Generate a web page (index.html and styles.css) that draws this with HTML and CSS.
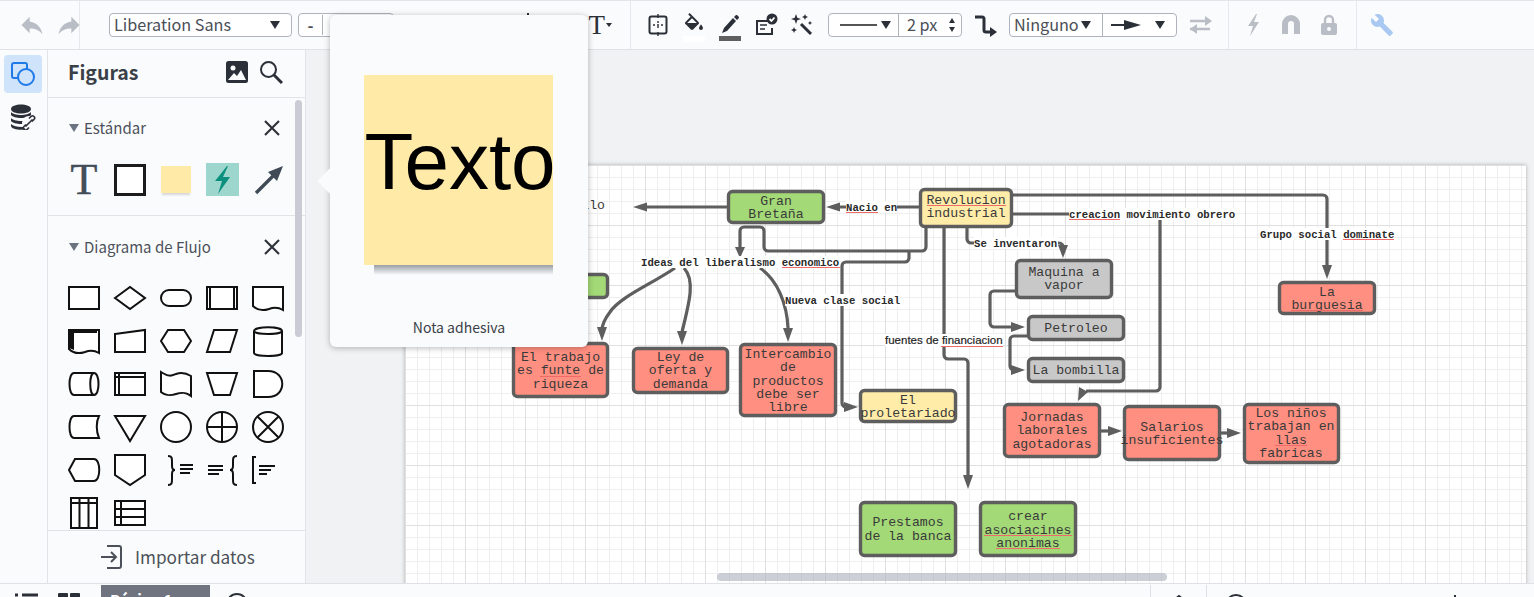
FILE: index.html
```html
<!DOCTYPE html>
<html lang="es">
<head>
<meta charset="utf-8">
<title>Mapa conceptual</title>
<link rel="stylesheet" href="styles.css">
</head>
<body>
<header class="toolbar">
  <div class="tsec sec-history">
    <svg class="ic28" viewBox="0 0 24 24"><path class="f-muted" d="M10 9V5l-7 7 7 7v-4.100c5 0 8.500 1.600 11 5.100-1-5-4-10-11-11z"/></svg>
    <svg class="ic28" viewBox="0 0 24 24"><path class="f-muted" d="M14 9V5l7 7-7 7v-4.100c-5 0-8.500 1.600-11 5.100 1-5 4-10 11-11z"/></svg>
  </div>
  <div class="tsec sec-text">
    <div class="ctl font-select"><span class="ctl-text">Liberation Sans</span><i class="caret"></i></div>
    <div class="ctl size-box"><span class="size-minus">-</span><span class="size-value">12</span><span class="size-plus">+</span></div>
    <span class="peek"></span>
    <span class="t-tool"><span class="t-glyph">T</span><i class="caret caret-sm"></i></span>
  </div>
  <div class="tsec sec-format">
    <svg class="ic24" viewBox="0 0 24 24"><rect class="s-dark" x="3.500" y="3.500" width="17" height="17" rx="2"/><path class="s-thin" d="M12 1v4M12 19v4M12 8v2M12 13v2M7 12h2M11 12h2M15 12h2"/></svg>
    <span class="bucket">
      <svg class="ic24" viewBox="0 0 24 24"><path class="f-dark" d="M16.560 8.940L7.620 0 6.210 1.410l2.380 2.380-5.150 5.150c-.59.59-.59 1.540 0 2.120l5.500 5.500c.29.29.68.44 1.060.44s.77-.15 1.060-.44l5.500-5.500c.59-.58.59-1.530 0-2.120zM5.210 10L10 5.210 14.790 10H5.210zM19 11.500s-2 2.170-2 3.500c0 1.100.9 2 2 2s2-.9 2-2c0-1.330-2-3.500-2-3.500z"/><path class="f-dark" d="M4 10h12l-6 6z"/></svg>
      <i class="bar-white"></i>
    </span>
    <span class="bucket">
      <svg class="ic24" viewBox="0 0 24 24"><path class="f-dark" d="M6 15l-2 5 5-2L18 8l-3-3zM16 4l3 3 1.500-1.500c.6-.6.6-1.400 0-2l-1-1c-.6-.6-1.400-.6-2 0z"/></svg>
      <i class="bar-dark"></i>
    </span>
    <svg class="ic24" viewBox="0 0 24 24"><path class="s-dark" d="M16 8H3v13h15v-6"/><path class="s-thin" d="M6 12h7M6 16h5"/><circle class="f-dark" cx="18" cy="6" r="5.500"/><path class="s-white" d="M15.500 6l2 2 3-3.500"/></svg>
    <svg class="ic24" viewBox="0 0 24 24"><path class="s-thick" d="M11 11l10 10"/><path class="f-dark" d="M6 1l1.300 3.700L11 6 7.300 7.300 6 11 4.700 7.300 1 6l3.700-1.300zM15 1l.9 2.100L18 4l-2.100.9L15 7l-.9-2.100L12 4l2.100-.9zM4 14l.9 2.100L7 17l-2.100.9L4 20l-.9-2.100L1 17l2.100-.9zM20 8l.7 1.300L22 10l-1.300.7L20 12l-.7-1.300L18 10l1.300-.7z"/></svg>
    <div class="ctl line-box">
      <span class="line-pick"><i class="line-sample"></i><i class="caret"></i></span>
      <span class="line-width"><span class="ctl-text">2 px</span><span class="spin"><i class="caret caret-up"></i><i class="caret caret-xs"></i></span></span>
    </div>
    <svg class="ic24" viewBox="0 0 24 24"><path class="s-thick" d="M1 4h7a2 2 0 0 1 2 2v11a2 2 0 0 0 2 2h5"/><path class="f-dark" d="M16 14l7 5-7 5z"/></svg>
    <div class="ctl end-box">
      <span class="end-start"><span class="ctl-text">Ninguno</span><i class="caret"></i></span>
      <span class="end-finish"><svg class="end-arrow" viewBox="0 0 32 12"><path class="s-dark" d="M1 6h18"/><path class="f-dark" d="M14 1l17 5-17 5z"/></svg><i class="caret"></i></span>
    </div>
    <svg class="ic24" viewBox="0 0 24 24"><path class="s-muted" d="M1 8h20M1 16h20"/><path class="f-muted" d="M16 3l7 5-7 5zM8 11l-7 5 7 5z"/></svg>
  </div>
  <div class="tsec sec-lock">
    <svg class="ic24" viewBox="0 0 24 24"><path class="f-muted" d="M15 1L7 13h5l-3 10 9-14h-5l3-8z"/></svg>
    <svg class="ic24" viewBox="0 0 24 24"><path class="f-muted" d="M3 11a9 9 0 0 1 18 0v10h-6V11a3 3 0 0 0-6 0v10H3z"/></svg>
    <svg class="ic24" viewBox="0 0 24 24"><path class="s-muted" d="M8 11V7a4 4 0 0 1 8 0v4"/><rect class="f-muted" x="4" y="10" width="16" height="12" rx="2"/><circle class="f-paper" cx="12" cy="16" r="2"/></svg>
  </div>
  <div class="tsec sec-tools">
    <svg class="ic24" viewBox="0 0 24 24"><path class="f-blue" d="M22.700 19l-9.100-9.100c.9-2.300.4-5-1.500-6.900-2-2-5-2.400-7.400-1.300L9 6 6 9 1.600 4.700C.4 7.100.9 10.100 2.900 12.100c1.900 1.900 4.600 2.400 6.900 1.500l9.100 9.100c.4.4 1 .4 1.400 0l2.300-2.300c.5-.4.5-1.100.1-1.400z"/></svg>
  </div>
</header>

<main class="workspace">
  <nav class="rail">
    <div class="rail-btn rail-active">
      <svg class="ic24" viewBox="0 0 24 24"><rect class="s-blue" x="1" y="1" width="15" height="15" rx="2"/><circle class="s-blue fill-active" cx="15" cy="15" r="8"/></svg>
    </div>
    <div class="rail-btn">
      <svg class="ic26" viewBox="0 0 26 26"><path class="f-dark" d="M1 5c0-6 20-6 20 0s-20 6-20 0zM1 8c3 4 17 4 20 0v3c-3 4-17 4-20 0zM1 14c3 4 17 4 20 0v3c-3 4-17 4-20 0zM1 20c3 3 12 4 16 2v3c-6 2-16 0-16-3z"/><circle class="f-paper" cx="19" cy="19" r="7"/><path class="s-chain" d="M15.500 22.500l7-7M19 14.500l2-2c2-2 5 1 3 3l-2 2M19 23.500l-2 2c-2 2-5-1-3-3l2-2"/></svg>
    </div>
  </nav>

  <aside class="panel">
    <div class="panel-head">
      <h2 class="panel-title">Figuras</h2>
      <svg class="ic24" viewBox="0 0 24 24"><rect class="f-dark" x="1" y="1" width="22" height="22" rx="2.500"/><circle class="f-paper" cx="8" cy="8" r="2.500"/><path class="f-paper" d="M3 20l6-7 3 3 4-6 5 10z"/></svg>
      <svg class="ic24 head-search" viewBox="0 0 24 24"><circle class="s-dark" cx="9.500" cy="9.500" r="7.500"/><path class="s-thick" d="M15 15l8 8"/></svg>
    </div>
    <section class="group group-std">
      <div class="group-head"><i class="caret caret-grey"></i><span class="group-name">Estándar</span><svg class="close" viewBox="0 0 16 16"><path class="s-close" d="M1 1l14 14M15 1L1 15"/></svg></div>
      <div class="shapes">
        <span class="shape-t">T</span>
        <span class="shape-rect"></span>
        <span class="shape-note"></span>
        <span class="shape-bolt"><svg viewBox="0 0 33 33"><path class="f-teal" d="M21 3L9 18h7l-4 13 12-17h-7l5-11z"/></svg></span>
        <svg class="shape" viewBox="0 0 32 32"><path class="s-arrow" d="M4 29L22 11"/><path class="f-arrow" d="M31 2L25 17 16 8z"/></svg>
      </div>
    </section>
    <section class="group group-flow">
      <div class="group-head"><i class="caret caret-grey"></i><span class="group-name">Diagrama de Flujo</span><svg class="close" viewBox="0 0 16 16"><path class="s-close" d="M1 1l14 14M15 1L1 15"/></svg></div>
      <div class="shapes shapes-flow">
        <svg class="shape" viewBox="0 0 32 32"><rect class="sh" x="1" y="5" width="30" height="22"/></svg>
        <svg class="shape" viewBox="0 0 32 32"><path class="sh" d="M1 16L16 5l15 11-15 11z"/></svg>
        <svg class="shape" viewBox="0 0 32 32"><rect class="sh" x="1" y="8" width="30" height="16" rx="8"/></svg>
        <svg class="shape" viewBox="0 0 32 32"><rect class="sh" x="1" y="5" width="30" height="22"/><path class="sh" d="M4 5v22M28 5v22"/></svg>
        <svg class="shape" viewBox="0 0 32 32"><path class="sh" d="M1 5h30v23c-5-3-9-3-14-1-6 2-12 1-16-3z"/></svg>

        <svg class="shape" viewBox="0 0 32 32"><path class="sh" d="M1 5h30v23c-5-3-9-3-14-1-6 2-12 1-16-3z"/><path class="f-black" d="M1 4h28v4H6v17l-5-2z"/></svg>
        <svg class="shape" viewBox="0 0 32 32"><path class="sh" d="M1 9l30-4v22H1z"/></svg>
        <svg class="shape" viewBox="0 0 32 32"><path class="sh" d="M8 5h16l7 11-7 11H8L1 16z"/></svg>
        <svg class="shape" viewBox="0 0 32 32"><path class="sh" d="M8 5h23l-7 22H1z"/></svg>
        <svg class="shape" viewBox="0 0 32 32"><path class="sh" d="M2 6c0-5 28-5 28 0v22c0 4-28 4-28 0z"/><path class="sh" d="M2 6c0 4 28 4 28 0"/></svg>

        <svg class="shape" viewBox="0 0 32 32"><path class="sh" d="M6 5h20c6 0 6 22 0 22H6C0 27 0 5 6 5z"/><path class="sh" d="M26 5c-5 0-5 22 0 22"/></svg>
        <svg class="shape" viewBox="0 0 32 32"><rect class="sh" x="1" y="5" width="30" height="22"/><path class="sh" d="M1 9h30M5 5v22"/></svg>
        <svg class="shape" viewBox="0 0 32 32"><path class="sh" d="M1 4c8 5 10 4 15 2 6-2 10-1 15 2v20c-5-4-9-4-15-2-6 2-10 2-15-2z"/></svg>
        <svg class="shape" viewBox="0 0 32 32"><path class="sh" d="M1 5h30l-7 22H8z"/></svg>
        <svg class="shape" viewBox="0 0 32 32"><path class="sh" d="M2 3h14c19 0 19 26 0 26H2z"/></svg>

        <svg class="shape" viewBox="0 0 32 32"><path class="sh" d="M6 5h25c-3 6-3 15 0 22H6C0 27 0 5 6 5z"/></svg>
        <svg class="shape" viewBox="0 0 32 32"><path class="sh" d="M1 5h30L16 30z"/></svg>
        <svg class="shape" viewBox="0 0 32 32"><circle class="sh" cx="16" cy="16" r="15"/></svg>
        <svg class="shape" viewBox="0 0 32 32"><circle class="sh" cx="16" cy="16" r="15"/><path class="sh" d="M16 1v30M1 16h30"/></svg>
        <svg class="shape" viewBox="0 0 32 32"><circle class="sh" cx="16" cy="16" r="15"/><path class="sh" d="M5.500 5.500l21 21M26.500 5.500l-21 21"/></svg>

        <svg class="shape" viewBox="0 0 32 32"><path class="sh" d="M1 16L7 5h19c7 0 7 22 0 22H7z"/></svg>
        <svg class="shape" viewBox="0 0 32 32"><path class="sh" d="M1 1h30v20L16 31 1 21z"/></svg>
        <svg class="shape" viewBox="0 0 32 32"><path class="sh-thin" d="M8 2c4 0 4 2 4 6v4c0 2 1 4 3 4-2 0-3 2-3 4v5c0 4 0 6-4 6"/><path class="sh" d="M20 11h13M20 15h13M20 19h10"/></svg>
        <svg class="shape" viewBox="0 0 32 32"><path class="sh" d="M2 12h15M2 16h15M2 20h11"/><path class="sh-thin" d="M31 2c-4 0-4 2-4 6v4c0 2-1 4-3 4 2 0 3 2 3 4v5c0 4 0 6 4 6"/></svg>
        <svg class="shape" viewBox="0 0 32 32"><path class="sh-thin" d="M4 3H1v26h3"/><path class="sh" d="M7 12h16M7 16h12M7 20h8"/></svg>

        <svg class="shape" viewBox="0 0 32 32"><rect class="sh" x="3" y="1" width="26" height="30"/><path class="sh" d="M3 6h26M11.500 1v30M20.500 1v30"/></svg>
        <svg class="shape" viewBox="0 0 32 32"><rect class="sh" x="1" y="4" width="30" height="24"/><path class="sh" d="M7 4v24M1 12h30M1 20h30"/></svg>
      </div>
    </section>
    <div class="panel-foot">
      <svg class="ic24" viewBox="0 0 24 24"><path class="s-grey" d="M7 1h12a2 2 0 0 1 2 2v18a2 2 0 0 1-2 2H7M1 12h15"/><path class="s-grey" d="M11 7l5 5-5 5"/></svg>
      <span class="foot-label">Importar datos</span>
    </div>
    <i class="panel-scroll"></i>
  </aside>

  <div class="stage">
    <div class="paper">
      <svg class="diagram" viewBox="405 165 1121 600">
        <g class="links">
          <path d="M727 207H640"/>
          <path d="M919 207H835"/>
          <path d="M740 250V231a4 4 0 0 1 4-4h16a4 4 0 0 1 4 4v16a4 4 0 0 0 4 4h154a4 4 0 0 0 4-4v-20"/>
          <path d="M909 251v7a4 4 0 0 1-4 4h-59a4 4 0 0 0-4 4v137a4 4 0 0 0 4 4h4"/>
          <path d="M944 227v128a4 4 0 0 0 4 4h16a4 4 0 0 1 4 4v113"/>
          <path d="M967 227v12a4 4 0 0 0 4 4h88a4 4 0 0 1 4 4v3"/>
          <path d="M1013 214h60"/>
          <path d="M1160 218v169a4 4 0 0 1-4 4h-70"/>
          <path d="M1013 195h310a4 4 0 0 1 4 4v68"/>
          <path d="M1015 291h-21a4 4 0 0 0-4 4v28a4 4 0 0 0 4 4h20"/>
          <path d="M1027 336h-13a4 4 0 0 0-4 4v26a4 4 0 0 0 4 4h2"/>
          <path d="M1101 431h10"/>
          <path d="M1220 433h10"/>
          <path d="M675 268c-25 17-55 29-65 44-6 8-8 14-8 18"/>
          <path d="M684 268c11 12 6 32-2 64"/>
          <path d="M760 268c18 12 27 37 28 60"/>
        </g>
        <g class="heads">
          <path d="M633 207l14-4.500v9z"/>
          <path d="M826 207l14-4.500v9z"/>
          <path d="M740 258l-5-11h10z"/>
          <path d="M858 407l-14-5v10z"/>
          <path d="M968 489l-5-14h10z"/>
          <path d="M1063 258l-5-13h10z"/>
          <path d="M1327 279l-5-14h10z"/>
          <path d="M1025 327l-14-5v10z"/>
          <path d="M1025 370l-14-5v10z"/>
          <path d="M1122 431l-14-5v10z"/>
          <path d="M1241 433l-14-5v10z"/>
          <path d="M602 341l-5-14h10z"/>
          <path d="M682 345l-5-14h10z"/>
          <path d="M788 342l-5-14h10z"/>
          <path d="M1078 401l1-14 9 5z"/>
        </g>

        <g class="label-bg">
          <rect x="846" y="201" width="51" height="12"/>
          <rect x="641" y="256" width="199" height="12"/>
          <rect x="785" y="294" width="115" height="12"/>
          <rect x="885" y="334" width="118" height="12"/>
          <rect x="974" y="237" width="84" height="12"/>
          <rect x="1069" y="208" width="166" height="12"/>
          <rect x="1260" y="228" width="134" height="12"/>
        </g>
        <g class="labels">
          <text x="846" y="211">Nacio en</text>
          <text x="641" y="266">Ideas del liberalismo economico</text>
          <text x="785" y="304">Nueva clase social</text>
          <text x="974" y="247">Se inventaron</text>
          <text x="1069" y="218">creacion movimiento obrero</text>
          <text x="1260" y="238">Grupo social dominate</text>
        </g>
        <text class="label-sans" x="885" y="344">fuentes de financiacion</text>

        <rect class="node green" x="728.500" y="191.500" width="95" height="31" rx="4"/>
        <rect class="node yellow" x="920.500" y="189.500" width="91" height="37" rx="4"/>
        <rect class="node green" x="520.500" y="274.500" width="87" height="23" rx="4"/>
        <rect class="node red" x="513.500" y="343.500" width="94" height="53" rx="4"/>
        <rect class="node red" x="633.500" y="348.500" width="94" height="44" rx="4"/>
        <rect class="node red" x="740.500" y="344.500" width="95" height="71" rx="4"/>
        <rect class="node yellow" x="860.500" y="390.500" width="95" height="31" rx="4"/>
        <rect class="node grey" x="1016.500" y="260.500" width="95" height="37" rx="4"/>
        <rect class="node grey" x="1028.500" y="316.500" width="95" height="23" rx="4"/>
        <rect class="node grey" x="1028.500" y="358.500" width="95" height="23" rx="4"/>
        <rect class="node red" x="1279.500" y="282.500" width="95" height="31" rx="4"/>
        <rect class="node red" x="1004.500" y="404.500" width="95" height="52" rx="4"/>
        <rect class="node red" x="1124.500" y="406.500" width="95" height="53" rx="4"/>
        <rect class="node red" x="1244.500" y="404.500" width="94" height="58" rx="4"/>
        <rect class="node green" x="860.500" y="502.500" width="95" height="53" rx="4"/>
        <rect class="node green" x="980.500" y="502.500" width="95" height="53" rx="4"/>

        <g class="node-text">
          <text class="start-end" x="605" y="209">Desarrollo</text>
          <text x="776" y="205">Gran</text><text x="776" y="218">Bretaña</text>
          <text x="966" y="204">Revolucion</text><text x="966" y="217">industrial</text>
          <text x="560.500" y="361">El trabajo</text><text x="560.500" y="374">es funte de</text><text x="560.500" y="388">riqueza</text>
          <text x="680.500" y="361">Ley de</text><text x="680.500" y="374">oferta y</text><text x="680.500" y="388">demanda</text>
          <text x="788" y="358">Intercambio</text><text x="788" y="371">de</text><text x="788" y="385">productos</text><text x="788" y="398">debe ser</text><text x="788" y="411">libre</text>
          <text x="908" y="404">El</text><text x="908" y="417">proletariado</text>
          <text x="1064" y="276">Maquina a</text><text x="1064" y="289">vapor</text>
          <text x="1076" y="332">Petroleo</text>
          <text x="1076" y="374">La bombilla</text>
          <text x="1327" y="296">La</text><text x="1327" y="309">burguesia</text>
          <text x="1052" y="421">Jornadas</text><text x="1052" y="434">laborales</text><text x="1052" y="448">agotadoras</text>
          <text x="1172" y="431">Salarios</text><text x="1172" y="444">insuficientes</text>
          <text x="1291" y="417">Los niños</text><text x="1291" y="430">trabajan en</text><text x="1291" y="444">llas</text><text x="1291" y="457">fabricas</text>
          <text x="908" y="526">Prestamos</text><text x="908" y="540">de la banca</text>
          <text x="1028" y="520">crear</text><text x="1028" y="534">asociacines</text><text x="1028" y="547">anonimas</text>
        </g>
        <g class="spell">
          <path d="M846 212.500h32M782 267.500h58M941 346.500h62M1069 219.500h51M1343 239.500h51"/>
          <path d="M927 205.500h79M540 376.500h41M1291 310.500h72M1275 445.500h32M984 535.500h88M996 548.500h64"/>
        </g>
      </svg>
    </div>
    <i class="stage-scroll"></i>
  </div>
</main>

<footer class="statusbar">
  <svg class="bar-ic" viewBox="0 0 24 24"><path class="s-thick" d="M1 11h3M8 11h16M1 17h3M8 17h16"/></svg>
  <svg class="bar-ic bar-grid" viewBox="0 0 24 24"><rect class="f-dark" x="1" y="9" width="10" height="10" rx="1"/><rect class="f-dark" x="13" y="9" width="10" height="10" rx="1"/></svg>
  <div class="page-tab">Página 1</div>
  <svg class="bar-ic bar-add" viewBox="0 0 24 24"><circle class="s-dark" cx="12" cy="20" r="10"/></svg>
  <span class="bar-spacer"></span>
  <div class="bar-cell"><svg class="bar-ic" viewBox="0 0 24 24"><path class="s-dark" d="M3 18l9-7 9 7"/></svg></div>
  <div class="bar-cell bar-cell-wide"><svg class="bar-ic" viewBox="0 0 24 24"><circle class="s-dark" cx="12" cy="20" r="10"/></svg><i class="bar-dot"></i></div>
</footer>

<aside class="popup">
  <div class="popup-note"><span class="popup-text">Texto</span></div>
  <div class="popup-label">Nota adhesiva</div>
</aside>
</body>
</html>
```
FILE: styles.css
```css
* { box-sizing: border-box; }
html, body { margin: 0; height: 597px; overflow: hidden; }
body {
  position: relative;
  display: flex;
  flex-direction: column;
  background: #fafbfd;
  color: #444a52;
  font-family: "Noto Sans CJK SC", "Noto Sans", sans-serif;
}
svg { display: block; flex: none; }
i { display: block; }

.ic24 { width: 24px; height: 24px; }
.ic26 { width: 26px; height: 26px; }
.ic28 { width: 28px; height: 28px; }

/* svg paint classes */
.f-muted { fill: #b9bdc5; }
.f-dark { fill: #2b3038; }
.f-paper { fill: #fafbfd; }
.f-blue { fill: #a9c9f2; }
.f-teal { fill: #0b8f7f; }
.f-black { fill: #111; }
.f-arrow { fill: #3f4a56; }
.s-dark, .s-thin, .s-white, .s-thick, .s-muted, .s-blue, .s-chain, .s-close, .s-grey, .s-arrow { fill: none; }
.s-dark { stroke: #2b3038; stroke-width: 2; }
.s-thin { stroke: #2b3038; stroke-width: 1.4; }
.s-white { stroke: #fff; stroke-width: 1.8; }
.s-thick { stroke: #2b3038; stroke-width: 3; }
.s-muted { stroke: #b9bdc5; stroke-width: 2.4; }
.s-blue { stroke: #1f7ae8; stroke-width: 2; }
.fill-active { fill: #cfe3fb; }
.s-chain { stroke: #2b3038; stroke-width: 1.6; }
.s-close { stroke: #2f343c; stroke-width: 2.2; }
.s-grey { stroke: #4c5159; stroke-width: 2; }
.s-arrow { stroke: #3f4a56; stroke-width: 3.4; }

/* toolbar */
.toolbar {
  flex: none;
  height: 50px;
  display: flex;
  align-items: center;
  background: #fafbfd;
  border-top: 1px solid #e3e5ea;
  border-bottom: 1px solid #dfe1e6;
}
.tsec {
  height: 48px;
  display: flex;
  align-items: center;
  border-right: 1px solid #e6e8ec;
}
.sec-history { width: 80px; padding-left: 18px; gap: 9px; }
.sec-text { width: 551px; padding-left: 29px; position: relative; }
.sec-format { width: 598px; padding-left: 15px; gap: 12px; }
.sec-lock { width: 128px; padding-left: 12px; gap: 14px; }
.sec-tools { flex: 1; padding-left: 13px; border-right: 0; }

.ctl {
  height: 24px;
  display: flex;
  align-items: center;
  background: #fff;
  border: 1px solid #aeb3bd;
  border-radius: 4px;
  font-size: 16.2px;
  line-height: 20px;
  color: #4a4f57;
}
.ctl-text { white-space: nowrap; padding-bottom: 2px; }
.caret {
  flex: none;
  width: 0;
  height: 0;
  border-left: 5px solid transparent;
  border-right: 5px solid transparent;
  border-top: 8px solid #2b3038;
}
.caret-sm { border-left-width: 3px; border-right-width: 3px; border-top-width: 4px; }
.caret-xs { border-left-width: 3px; border-right-width: 3px; border-top-width: 5px; }
.caret-up { border-left-width: 3px; border-right-width: 3px; border-top: 0; border-bottom: 5px solid #2b3038; }
.caret-grey { border-top-color: #6b7280; }

.font-select { width: 183px; padding: 0 11px 0 4px; justify-content: space-between; }
.size-box { width: 96px; margin-left: 6px; }
.size-minus { width: 24px; text-align: center; font-weight: 700; border-right: 1px solid #aeb3bd; }
.size-value { width: 47px; text-align: center; border-right: 1px solid #aeb3bd; }
.size-plus { flex: 1; text-align: center; }
.peek {
  position: absolute;
  left: 447px;
  top: 12px;
  width: 2px;
  height: 3px;
  background: #2b3038;
}
.t-tool {
  margin-left: auto;
  margin-right: 18px;
  display: flex;
  align-items: center;
  gap: 1px;
}
.t-glyph {
  font-family: "Liberation Serif", serif;
  font-size: 27px;
  line-height: 28px;
  color: #2b3038;
}
.bucket { position: relative; display: block; width: 24px; height: 24px; }
.bar-white, .bar-dark { position: absolute; left: 1px; width: 22px; }
.bar-white { top: 23px; height: 6px; background: #fff; }
.bar-dark { top: 23px; height: 5px; background: #5f5f5f; }

.line-box { width: 134px; margin-left: 2px; }
.line-pick {
  width: 70px;
  height: 22px;
  padding: 0 7px 0 11px;
  display: flex;
  align-items: center;
  justify-content: space-between;
  border-right: 1px solid #aeb3bd;
}
.line-sample { width: 37px; height: 2px; background: #555; }
.line-width {
  flex: 1;
  display: flex;
  align-items: center;
  justify-content: space-between;
  padding: 0 6px 0 8px;
}
.spin { display: flex; flex-direction: column; gap: 4px; }
.end-box { width: 168px; margin-left: -1px; }
.end-start {
  width: 93px;
  height: 22px;
  padding: 0 11px 0 4px;
  display: flex;
  align-items: center;
  justify-content: space-between;
  border-right: 1px solid #aeb3bd;
}
.end-finish {
  flex: 1;
  display: flex;
  align-items: center;
  justify-content: space-between;
  padding: 0 11px 0 7px;
}
.end-arrow { width: 32px; height: 12px; }

/* workspace */
.workspace { flex: none; height: 533px; display: flex; }
.rail { flex: none; width: 48px; border-right: 1px solid #e1e3e8; padding: 5px 0 0 4px; display: flex; flex-direction: column; }
.rail-btn { width: 38px; height: 38px; border-radius: 4px; display: flex; align-items: center; justify-content: center; }
.rail-btn + .rail-btn { margin-top: 5px; }
.rail-active { background: #cfe3fb; }

.panel {
  position: relative;
  flex: none;
  width: 258px;
  display: flex;
  flex-direction: column;
  border-right: 1px solid #e1e3e8;
  background: #fafbfd;
}
.panel-head {
  flex: none;
  height: 48px;
  padding: 0 22px 3px 20px;
  display: flex;
  align-items: center;
  border-bottom: 1px solid #e1e3e8;
}
.panel-title { margin: 0; flex: 1; font-size: 19.5px; line-height: 28px; font-weight: 700; color: #3a4048; }
.head-search { margin-left: 10px; }
.group { flex: none; border-bottom: 1px solid #e1e3e8; padding: 18px 25px 0 21px; }
.group-std { height: 118px; }
.group-flow { height: 315px; padding-top: 19px; border-bottom: 1px solid #e1e3e8; }
.group-head { height: 24px; display: flex; align-items: center; gap: 5px; }
.group-name { flex: 1; font-size: 15px; line-height: 22px; color: #4c5159; }
.close { width: 16px; height: 16px; }
.shapes {
  margin: 23px 0 0 -1px;
  display: grid;
  grid-template-columns: repeat(5, 32px);
  grid-auto-rows: 33px;
  column-gap: 14px;
  row-gap: 11px;
  align-items: center;
}
.shapes-flow { grid-auto-rows: 32px; }
.shape { width: 32px; height: 32px; overflow: visible; }
.sh { fill: #fff; stroke: #111; stroke-width: 2; }
.sh-thin { fill: none; stroke: #111; stroke-width: 2; }
.shape-t {
  justify-self: center;
  font-family: "Liberation Serif", serif;
  font-size: 44px;
  line-height: 33px;
  color: #434d58;
  -webkit-text-stroke: .5px #434d58;
}
.shape-rect { width: 32px; height: 32px; background: #fff; border: 3px solid #1c1c1c; }
.shape-note { width: 30px; height: 27px; margin: -1px 0 0 1px; background: #ffeaa7; box-shadow: 0 3px 2px -1px #d7d7d7; }
.shape-bolt { width: 33px; height: 33px; background: #9dd6cc; }
.panel-foot {
  flex: 1;
  padding: 0 0 1px 52px;
  display: flex;
  align-items: center;
  gap: 11px;
}
.foot-label { font-size: 17.2px; line-height: 24px; color: #4c5159; }
.panel-scroll {
  position: absolute;
  left: 247px;
  top: 50px;
  width: 7px;
  height: 237px;
  border-radius: 4px;
  background: #c9ccd5;
}

/* canvas */
.stage {
  position: relative;
  flex: 1;
  overflow: hidden;
  background: #f1f2f4;
}
.paper {
  position: absolute;
  left: 99px;
  top: 115px;
  width: 1121px;
  height: 600px;
  background-color: #fff;
  background-image:
    linear-gradient(to right, #e0e0e0 1px, transparent 1px),
    linear-gradient(to bottom, #e0e0e0 1px, transparent 1px),
    linear-gradient(to right, #efefef 1px, transparent 1px),
    linear-gradient(to bottom, #efefef 1px, transparent 1px);
  background-size: 60px 60px, 60px 60px, 12px 12px, 12px 12px;
  box-shadow: 0 0 4px rgba(0, 0, 0, .28);
}
.diagram { width: 1121px; height: 600px; }
.links path { fill: none; stroke: #5e5e5e; stroke-width: 3.2; }
.heads path { fill: #5e5e5e; }
.label-bg rect { fill: #fff; }
.labels text { font: 700 10.67px "Liberation Mono", monospace; fill: #2a2a2a; }
.label-sans { font: 400 11.5px "Liberation Sans", sans-serif; fill: #1f1f1f; stroke: #1f1f1f; stroke-width: .2; }
.node { stroke: #5e5e5e; stroke-width: 3.4; }
.green { fill: #a3d977; }
.yellow { fill: #ffeca9; }
.red { fill: #ff8f80; }
.grey { fill: #c8c8c8; }
.node-text text { font: 400 13.2px "Liberation Mono", monospace; fill: #3a3a3a; text-anchor: middle; }
.node-text .start-end { text-anchor: end; }
.spell path { fill: none; stroke: #f06a6a; stroke-width: 1; }
.stage-scroll {
  position: absolute;
  left: 411px;
  top: 523px;
  width: 450px;
  height: 8px;
  border-radius: 4px;
  background: rgba(170, 175, 186, .6);
}

/* status bar */
.statusbar {
  flex: none;
  height: 40px;
  display: flex;
  align-items: flex-start;
  padding-left: 14px;
  background: #fafbfd;
  border-top: 1px solid #dfe1e6;
}
.bar-ic { width: 24px; height: 24px; }
.bar-grid { margin-left: 19px; }
.page-tab {
  width: 109px;
  height: 30px;
  margin: 1px 0 0 20px;
  padding: 4px 0 0 9px;
  background: #6f7480;
  color: #fff;
  font-size: 15px;
  font-weight: 700;
  line-height: 22px;
}
.bar-add { margin-left: 15px; }
.bar-spacer { flex: 1; }
.bar-cell {
  position: relative;
  height: 30px;
  width: 56px;
  margin-top: 1px;
  border-left: 1px solid #dfe1e6;
  display: flex;
  justify-content: center;
}
.bar-cell-wide { width: 328px; padding-left: 17px; justify-content: flex-start; }
.bar-dot { position: absolute; left: 247px; top: 10px; width: 2px; height: 3px; background: #2b3038; }

/* hover preview */
.popup {
  position: absolute;
  left: 330px;
  top: 15px;
  width: 258px;
  height: 332px;
  padding: 60px 0 0 34px;
  background: #fafbfd;
  border-radius: 6px;
  box-shadow: 0 1px 6px rgba(0, 0, 0, .28);
}
.popup::before {
  content: "";
  position: absolute;
  left: -9px;
  top: 157px;
  width: 18px;
  height: 18px;
  background: #fafbfd;
  transform: rotate(45deg);
}
.popup-note {
  position: relative;
  width: 189px;
  height: 190px;
  display: flex;
  align-items: center;
  justify-content: center;
  padding: 0 0 16px 3px;
  background: #ffeaa7;
}
.popup-note::after {
  content: "";
  position: absolute;
  left: 10px;
  right: 0;
  top: 100%;
  height: 10px;
  background: linear-gradient(to bottom, #9a9ea5, rgba(154, 158, 165, 0));
}
.popup-text {
  font: 400 80px/92px "Liberation Sans", sans-serif;
  color: #000;
  white-space: nowrap;
}
.popup-label {
  width: 258px;
  margin: 51px 0 0 -34px;
  text-align: center;
  font-size: 14px;
  line-height: 22px;
  color: #3a3f47;
}
```
